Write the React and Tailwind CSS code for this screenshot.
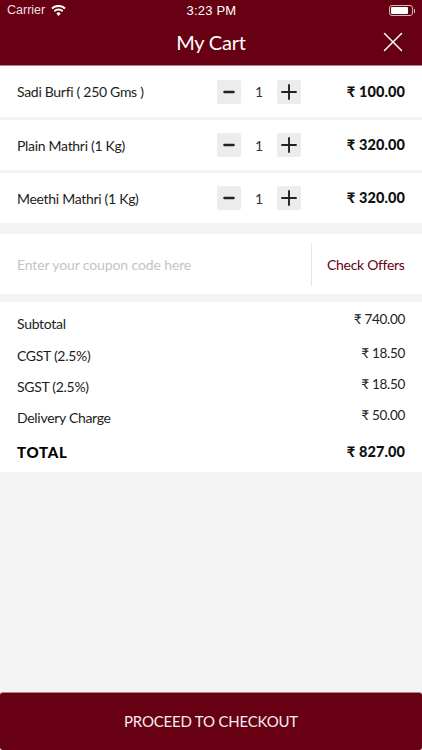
import React from "react";
import { X, Plus, Minus } from "lucide-react";

const font = "font-['Lato','Noto_Sans',sans-serif]";
const items = [
  { name: "Sadi Burfi ( 250 Gms )", price: "100.00", h: "h-[51px]" },
  { name: "Plain Mathri (1 Kg)", price: "320.00", h: "h-[50px]" },
  { name: "Meethi Mathri (1 Kg)", price: "320.00", h: "h-[50px]" },
];
const lines = [
  { label: "Subtotal", value: "740.00", h: "h-[37px]", lt: "pt-[6px]", vt: "-mt-[3px]" },
  { label: "CGST (2.5%)", value: "18.50", h: "h-[31px]", lt: "pt-[1px]", vt: "-mt-[3px]" },
  { label: "SGST (2.5%)", value: "18.50", h: "h-[31px]", lt: "pt-[2px]", vt: "-mt-[3px]" },
  { label: "Delivery Charge", value: "50.00", h: "h-[31px]", lt: "pt-[2px]", vt: "-mt-[3px]" },
];

function Stepper() {
  return (
    <div className="flex items-center">
      <div className="flex h-6 w-6 items-center justify-center rounded-[2px] bg-[#ececec] text-[#222]">
        <Minus size={16} strokeWidth={3.4} />
      </div>
      <span className="w-[36px] text-center text-[14px] text-[#333]">1</span>
      <div className="flex h-6 w-6 items-center justify-center rounded-[2px] bg-[#ececec] text-[#222]">
        <Plus size={28} strokeWidth={1.9} />
      </div>
    </div>
  );
}

export default function App() {
  return (
    <div className={`flex h-[750px] w-[422px] flex-col overflow-hidden bg-[#f3f3f3] ${font}`}>
      <header className="h-[65px] bg-[#660012] text-white">
        <div className="grid h-[21px] grid-cols-3 items-center px-[7px] font-['Liberation_Sans',sans-serif] text-[12.5px]">
          <div className="flex items-center gap-[6px] text-[#f3dfe2]">
            <span>Carrier</span>
            <svg width="15" height="11" viewBox="0 0 15 11" fill="white">
              <path d="M7.5 11 5.3 8.4a3.2 3.2 0 0 1 4.4 0Z" />
              <path d="M3.9 6.9 2.7 5.5a7 7 0 0 1 9.6 0l-1.2 1.4a5.2 5.2 0 0 0-7.2 0Z" />
              <path d="M1.6 4.2.3 2.7a10.8 10.8 0 0 1 14.4 0l-1.3 1.5a8.9 8.9 0 0 0-11.8 0Z" />
            </svg>
          </div>
          <div className="pl-[1px] text-center text-[13px] font-medium tracking-[0.2px]">3:23 PM</div>
          <div className="flex justify-end">
            <div className="flex items-center">
              <div className="h-[11px] w-[24px] rounded-[3px] border border-[#d9b8bd] p-[1px]">
                <div className="h-full w-[17px] rounded-[1px] bg-white" />
              </div>
              <div className="ml-px h-[4px] w-px bg-[#d9b8bd]" />
            </div>
          </div>
        </div>
        <div className="relative flex h-[44px] items-center justify-center pb-[3px]">
          <span className="text-[20px] tracking-[-0.2px]">My Cart</span>
          <X className="absolute right-[12px] top-[4px]" size={34} strokeWidth={1.05} />
        </div>
      </header>
      <div className="h-px bg-[#b9808a]" />

      {items.map((item, i) => (
        <div key={i} className={`mb-[3px] flex ${item.h} items-center bg-white pl-[17px] pr-[17px]`}>
          <span className="w-[200px] text-[14px] tracking-[-0.3px] text-[#1c1c1c]">{item.name}</span>
          <Stepper />
          <span className="ml-auto text-[14.5px] font-black tracking-[0.1px] text-[#111]">₹ {item.price}</span>
        </div>
      ))}

      <div className="mt-[8px] flex h-[60px] items-center bg-white">
        <span className="flex-1 pl-[17px] text-[14px] tracking-[-0.12px] text-[#c4c4c4]">Enter your coupon code here</span>
        <div className="h-[43px] w-px bg-[#e6e6e6]" />
        <span className="w-[110px] pl-[15px] text-[14px] tracking-[-0.3px] text-[#660012]">Check Offers</span>
      </div>

      <div className="mt-[8px] flex h-[170px] flex-col bg-white px-[17px]">
        {lines.map((l) => (
          <div key={l.label} className={`flex ${l.h} items-center justify-between`}>
            <span className={`text-[14px] tracking-[-0.3px] text-[#1c1c1c] ${l.lt}`}>{l.label}</span>
            <span className={`text-[13.5px] tracking-[-0.3px] text-[#222] ${l.vt}`}>₹ {l.value}</span>
          </div>
        ))}
        <div className="flex flex-1 items-center justify-between">
          <span className="pt-[1px] text-[15px] font-black tracking-[0.7px] text-black">TOTAL</span>
          <span className="text-[14.5px] font-black tracking-[0.1px] text-[#111]">₹ 827.00</span>
        </div>
      </div>

      <div className="mt-auto flex h-[58px] items-center justify-center rounded-[3px] border-t border-[#b9808a] bg-[#660012] text-[15px] tracking-[-0.2px] text-[#f7ecee]">
        PROCEED TO CHECKOUT
      </div>
    </div>
  );
}
